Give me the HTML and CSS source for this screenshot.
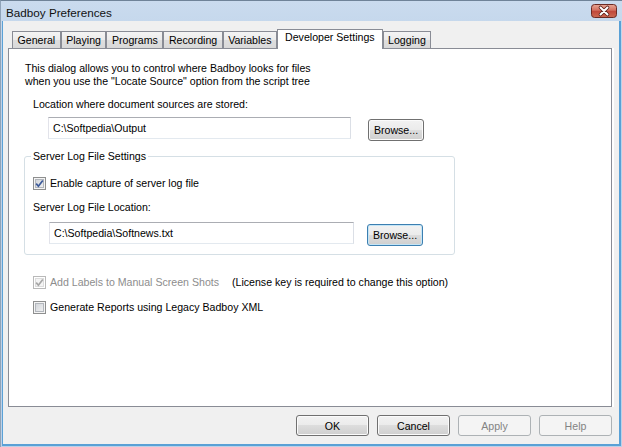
FILE: index.html
```html
<!DOCTYPE html>
<html lang="en">
<head>
    <meta charset="UTF-8">
    <title>Badboy Preferences</title>
    <link rel="stylesheet" href="styles.css">
</head>
<body>
    <div class="window">
        <div class="titlebar">
            <span class="title">Badboy Preferences</span>
            <svg class="close" width="26" height="14" viewBox="0 0 26 14">
                <defs>
                    <linearGradient id="cg" x1="0" y1="0" x2="0" y2="1">
                        <stop offset="0" stop-color="#e8a896"/>
                        <stop offset="0.45" stop-color="#d26f5f"/>
                        <stop offset="0.5" stop-color="#c0463a"/>
                        <stop offset="1" stop-color="#cc6a52"/>
                    </linearGradient>
                </defs>
                <rect x="0.5" y="0.5" width="25" height="13" rx="3" fill="url(#cg)" stroke="#6b2a24"/>
                <path d="M9.5 3.5 L16.5 10.5 M16.5 3.5 L9.5 10.5" stroke="#5a1f1a" stroke-width="3.6" stroke-linecap="round"/>
                <path d="M9.5 3.5 L16.5 10.5 M16.5 3.5 L9.5 10.5" stroke="#ffffff" stroke-width="2" stroke-linecap="round"/>
            </svg>
        </div>
        <div class="client">
            <div class="tabs">
                <span class="tab">General</span>
                <span class="tab">Playing</span>
                <span class="tab">Programs</span>
                <span class="tab">Recording</span>
                <span class="tab">Variables</span>
                <span class="tab active">Developer Settings</span>
                <span class="tab">Logging</span>
            </div>
            <div class="panel">
                <p class="intro">This dialog allows you to control where Badboy looks for files<br>when you use the "Locate Source" option from the script tree</p>
                <div class="field-label">Location where document sources are stored:</div>
                <div class="row row-source">
                    <div class="textbox wide">C:\Softpedia\Output</div>
                    <button class="btn browse">Browse...</button>
                </div>

                <fieldset class="group">
                    <legend>Server Log File Settings</legend>
                    <div class="check first">
                        <span class="box"><svg width="11" height="11" viewBox="0 0 11 11"><path d="M2.2 5.6 L4.4 8.2 L8.8 2.4" fill="none" stroke="#3c5a9a" stroke-width="1.7"/></svg></span>
                        <span>Enable capture of server log file</span>
                    </div>
                    <div class="group-label">Server Log File Location:</div>
                    <div class="row row-log">
                        <div class="textbox wider">C:\Softpedia\Softnews.txt</div>
                        <button class="btn browse focus">Browse...</button>
                    </div>
                </fieldset>

                <div class="check disabled labels-row">
                    <span class="box"><svg width="11" height="11" viewBox="0 0 11 11"><path d="M2.2 5.6 L4.4 8.2 L8.8 2.4" fill="none" stroke="#a6a6a6" stroke-width="1.7"/></svg></span>
                    <span class="fixed-label">Add Labels to Manual Screen Shots</span>
                    <span class="note">(License key is required to change this option)</span>
                </div>
                <div class="check legacy-row">
                    <span class="box"></span>
                    <span>Generate Reports using Legacy Badboy XML</span>
                </div>
            </div>
            <div class="buttons">
                <button class="btn dialog">OK</button>
                <button class="btn dialog">Cancel</button>
                <button class="btn dialog" disabled>Apply</button>
                <button class="btn dialog" disabled>Help</button>
            </div>
        </div>
    </div>
</body>
</html>
```

FILE: styles.css
```css
* { box-sizing: border-box; }
body {
    margin: 0;
    font-family: "Liberation Sans", Arial, sans-serif;
    font-size: 10.6px;
    color: #000;
}
.window {
    width: 622px;
    height: 447px;
    background: linear-gradient(#cadbee, #bdd2e9 60px, #bcd1e8);
    border-top: 1px solid #6f8398;
    border-left: 1px solid #8fa3b8;
    display: flex;
    flex-direction: column;
}
.titlebar {
    height: 20px;
    display: flex;
    align-items: flex-start;
    justify-content: space-between;
    padding: 0 5px 0 5px;
}
.title {
    font-size: 11.7px;
    line-height: 14px;
    margin-top: 5px;
    color: #111;
}
.close { margin-top: 3px; }
.client {
    flex: 1;
    margin: 0 1px 1px 1px;
    background: #f0f0f0;
    border: 1px solid #5aa1d6;
    border-top: none;
    border-right-width: 2px;
    border-bottom-width: 2px;
    padding: 8px 7px 0 5px;
    display: flex;
    flex-direction: column;
}

/* tabs */
.tabs {
    display: flex;
    align-items: flex-end;
    height: 20px;
    margin-bottom: -1px;
    padding-left: 4px;
    position: relative;
    z-index: 1;
}
.tab {
    height: 17px;
    margin-bottom: 1px;
    padding: 0 4.5px;
    border: 1px solid #898c95;
    border-bottom: none;
    background: linear-gradient(#f4f4f4, #ebebeb 50%, #dedede 50%, #d9d9d9);
    line-height: 16px;
}
.tab.active {
    height: 20px;
    margin-bottom: 0;
    padding: 0 7px;
    background: #fff;
    line-height: 15px;
}
.panel {
    height: 359px;
    border: 1px solid #898c95;
    background: #fff;
    box-shadow: 2px 0 0 #fff;
}

.intro {
    margin: 13px 0 0 16px;
    line-height: 13px;
}
.field-label {
    margin: 10px 0 0 24px;
    line-height: 13px;
}
.row {
    display: flex;
    align-items: flex-start;
}
.row-source { margin: 6px 0 0 39px; }
.textbox {
    height: 22px;
    border: 1px solid;
    border-color: #abadb3 #dbdfe6 #e3e9ef #e2e3ea;
    background: #fff;
    padding: 0 4px;
    line-height: 20px;
}
.textbox.wide { width: 303px; }
.textbox.wider { width: 305px; }

.btn {
    height: 22px;
    border: 1px solid #707070;
    border-radius: 3px;
    background: linear-gradient(#f2f2f2, #ebebeb 50%, #dddddd 50%, #cfcfcf);
    box-shadow: inset 0 0 0 1px #fbfbfb;
    font: inherit;
    color: #000;
    padding: 0;
}
.btn.browse { width: 56px; margin-top: 2px; }
.row-source .browse { margin-left: 17px; }
.row-log .browse { margin-left: 13px; }
.btn.focus {
    border-color: #3c7fb1;
    box-shadow: inset 0 0 0 1px #c4e5f6;
}
.btn:disabled {
    border-color: #adb2b5;
    background: #f4f4f4;
    box-shadow: none;
    color: #838383;
}

/* group box */
.group {
    margin: 9px 0 0 15px;
    width: 431px;
    border: 1px solid #d5dfe5;
    border-radius: 3px;
    padding: 0 0 8px 8px;
    min-width: 0;
}
.group legend {
    padding: 0 2px;
    margin-left: -2px;
    line-height: 13px;
}
.group-label {
    margin-top: 11px;
    line-height: 13px;
}
.row-log { margin: 8px 0 0 16px; }
.row-log .browse { margin-top: 2px; }

/* checkboxes */
.check {
    display: flex;
    align-items: center;
    height: 13px;
    line-height: 13px;
}
.check.first { margin-top: 14px; }
.box {
    width: 13px;
    height: 13px;
    margin-right: 4px;
    border: 1px solid #8e8f8f;
    background: linear-gradient(135deg, #cbcfd5, #f6f6f6);
    box-shadow: inset 0 0 0 1px #f4f4f4, inset 0 0 0 2px #b2b6bc;
    display: flex;
    align-items: center;
    justify-content: center;
}
.box svg { display: block; }
.labels-row { margin: 21px 0 0 24px; }
.legacy-row { margin: 12px 0 0 24px; }
.check.disabled .box {
    border-color: #b9b9b9;
    background: #f4f4f4;
    box-shadow: inset 0 0 0 1px #fff, inset 0 0 0 2px #dcdcdc;
}
.check.disabled .fixed-label { color: #8d8d8d; }
.fixed-label { width: 182px; }

/* dialog buttons */
.buttons {
    display: flex;
    justify-content: flex-end;
    gap: 8px;
    margin-top: 8px;
}
.btn.dialog {
    width: 73px;
    height: 21px;
}
```
